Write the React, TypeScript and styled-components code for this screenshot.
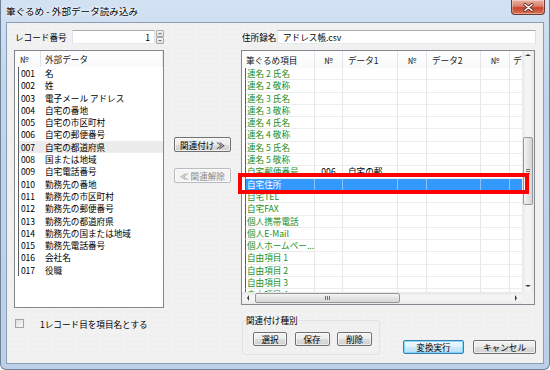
import React from 'react';
import styled, { createGlobalStyle } from 'styled-components';

const FONT = `"Noto Sans CJK JP", "Noto Sans", sans-serif`;

const Global = createGlobalStyle`
  html, body { margin: 0; padding: 0; background: #ffffff; }
  body { font-family: ${FONT}; }
  * { box-sizing: border-box; }
`;

const Window = styled.div`
  width: 550px;
  height: 370px;
  display: flex;
  flex-direction: column;
  border: 1px solid #6f8399;
  border-top: none;
  border-radius: 0 0 6px 6px;
  background: linear-gradient(180deg, #d3e2f3 0%, #c2d5ec 25%, #bcd0e8 100%);
  overflow: hidden;
`;

const TitleBar = styled.div`
  height: 22px;
  flex: none;
  display: flex;
  align-items: flex-start;
  padding: 0 4px 0 5px;
`;

const TitleText = styled.span`
  flex: 1;
  font-size: 9.6px;
  line-height: 22px;
  color: #000;
  white-space: nowrap;
  text-shadow: 0 0 4px #ffffff, 0 0 2px #ffffff;
`;

const CloseBtn = styled.div`
  width: 34px;
  height: 15px;
  border: 1px solid #6d3a35;
  border-top: none;
  border-radius: 0 0 4px 4px;
  background: linear-gradient(180deg, #eab1a4 0%, #d87f6c 45%, #c7452f 55%, #d77250 100%);
  box-shadow: inset 0 0 0 1px rgba(255, 255, 255, 0.35);
  display: flex;
  align-items: center;
  justify-content: center;
`;

const Client = styled.div`
  flex: 1;
  margin: 0 5px 5px 5px;
  background-color: #f0f0f0;
  background-image: radial-gradient(circle, rgba(255, 255, 255, 0.7) 0.6px, transparent 0.8px);
  background-size: 6px 6px;
  border: 1px solid #8a9fb7;
  display: grid;
  grid-template-columns: 150px 57px 295px;
  column-gap: 10px;
  align-items: start;
  padding: 7px 0 0 7px;
  font-family: ${FONT};
  font-size: 8.6px;
  color: #000;
`;

const Column = styled.div`
  display: flex;
  flex-direction: column;
`;

const MidColumn = styled.div`
  display: flex;
  flex-direction: column;
  gap: 16px;
  padding-top: 107px;
`;

const FieldRow = styled.div`
  display: flex;
  align-items: center;
  height: 14px;
  margin-bottom: 6px;
`;

const FieldLabel = styled.span<{ $w: number }>`
  width: ${(p) => p.$w}px;
  flex: none;
  padding-left: 1px;
  white-space: nowrap;
  line-height: 14px;
`;

const TextBox = styled.div<{ $right?: boolean; $pad?: number }>`
  flex: 1;
  height: 14px;
  background: #ffffff;
  border: 1px solid;
  border-color: #abadb3 #dbdfe6 #e3e9ef #e2e3ea;
  display: flex;
  align-items: center;
  justify-content: ${(p) => (p.$right ? 'flex-end' : 'flex-start')};
  padding: 0 ${(p) => (p.$right ? p.$pad ?? 4 : 0)}px 0 ${(p) => (p.$right ? 0 : p.$pad ?? 5)}px;
  line-height: 12px;
  white-space: nowrap;
`;

const SpinBox = styled.div`
  width: 8px;
  height: 14px;
  flex: none;
  margin-left: 1px;
  display: flex;
  flex-direction: column;
`;

const SpinBtn = styled.div`
  flex: 1;
  border: 1px solid #a9a9a9;
  border-radius: 1px;
  background: linear-gradient(180deg, #f6f6f6, #dcdcdc);
  display: flex;
  align-items: center;
  justify-content: center;
`;

type Dir = 'up' | 'down' | 'left' | 'right';

const Tri = styled.span<{ $dir: Dir; $s?: number; $c?: string }>`
  width: 0;
  height: 0;
  flex: none;
  ${({ $dir, $s = 3, $c = '#3a3a3a' }) => {
    const t = 'transparent';
    if ($dir === 'up')
      return `border-left:${$s}px solid ${t};border-right:${$s}px solid ${t};border-bottom:${$s - 0.5}px solid ${$c};`;
    if ($dir === 'down')
      return `border-left:${$s}px solid ${t};border-right:${$s}px solid ${t};border-top:${$s - 0.5}px solid ${$c};`;
    if ($dir === 'left')
      return `border-top:${$s}px solid ${t};border-bottom:${$s}px solid ${t};border-right:${$s - 0.5}px solid ${$c};`;
    return `border-top:${$s}px solid ${t};border-bottom:${$s}px solid ${t};border-left:${$s - 0.5}px solid ${$c};`;
  }}
`;

/* left list */
const ListBox = styled.div`
  height: 258px;
  border: 1px solid #828790;
  background: #ffffff;
  overflow: hidden;
  display: flex;
  flex-direction: column;
`;

const ListHead = styled.div`
  display: flex;
  height: 16px;
  flex: none;
  background: linear-gradient(180deg, #ffffff, #f8f9fa);
`;

const HeadCell = styled.div<{ $w?: number; $pl?: number; $center?: boolean }>`
  ${(p) => (p.$w ? `width:${p.$w}px; flex:none;` : 'flex:1;')}
  border-right: 1px solid #e3e5e8;
  padding-left: ${(p) => p.$pl ?? 0}px;
  display: flex;
  align-items: center;
  justify-content: ${(p) => (p.$center ? 'center' : 'flex-start')};
  white-space: nowrap;
  overflow: hidden;
  color: #1a1a1a;
`;

const ListRow = styled.div<{ $hover?: boolean }>`
  display: flex;
  flex: none;
  height: 12.3px;
  line-height: 12.3px;
  margin-left: 3px;
  border-left: 1px solid #5c5c5c;
  background: ${(p) => (p.$hover ? '#ececec' : 'transparent')};
  white-space: nowrap;
`;

const NumCell = styled.span`
  width: 22px;
  flex: none;
  padding-left: 2px;
  letter-spacing: -0.2px;
`;

const NameCell = styled.span`
  padding-left: 4px;
`;

const CheckRow = styled.div`
  display: flex;
  align-items: center;
  margin-top: 11px;
  height: 9px;
`;

const CheckBox = styled.span`
  width: 9px;
  height: 9px;
  margin-left: 1px;
  flex: none;
  border: 1px solid #a3a3a3;
  background: linear-gradient(135deg, #dcdcdc, #fbfbfb);
`;

const CheckLabel = styled.span`
  margin-left: 16px;
  white-space: nowrap;
  line-height: 10px;
`;

/* buttons */
const Button = styled.div<{ $w: number; $h?: number; $disabled?: boolean; $default?: boolean }>`
  width: ${(p) => p.$w}px;
  height: ${(p) => p.$h ?? 14}px;
  flex: none;
  border: 1px solid ${(p) => (p.$disabled ? '#b8bcbf' : p.$default ? '#3c7fb1' : '#707070')};
  border-radius: 2px;
  background: ${(p) =>
    p.$disabled
      ? '#f4f4f4'
      : p.$default
      ? 'linear-gradient(180deg, #eef7fd 0%, #e0f1fc 50%, #cde9fa 51%, #b9dff6 100%)'
      : 'linear-gradient(180deg, #f3f3f3 0%, #ebebeb 50%, #dddddd 51%, #d0d0d0 100%)'};
  box-shadow: inset 0 0 0 1px ${(p) => (p.$default ? 'rgba(110, 210, 250, 0.8)' : 'rgba(255, 255, 255, 0.6)')};
  color: ${(p) => (p.$disabled ? '#8a8a8a' : '#000')};
  display: flex;
  align-items: center;
  justify-content: center;
  white-space: nowrap;
  line-height: 12px;
`;

/* right grid */
const GridBox = styled.div`
  position: relative;
  width: 294px;
  height: 255px;
  border: 1px solid #828790;
  background: #ffffff;
  display: grid;
  grid-template-columns: 280px 12px;
  grid-template-rows: 241px 12px;
`;

const GridView = styled.div`
  overflow: hidden;
  display: flex;
  flex-direction: column;
`;

const GridHead = styled.div`
  display: flex;
  height: 17px;
  flex: none;
  background: linear-gradient(180deg, #ffffff, #f8f9fa);
`;

const GridRow = styled.div`
  display: flex;
  flex: none;
  height: 12.3px;
`;

const GCell = styled.div<{ $w: number; $first?: boolean; $sel?: boolean; $green?: boolean; $center?: boolean; $pl?: number }>`
  width: ${(p) => (p.$first ? p.$w - 3 : p.$w)}px;
  flex: none;
  margin-left: ${(p) => (p.$first ? 3 : 0)}px;
  ${(p) => (p.$first ? 'border-left: 1px solid #5c5c5c;' : '')}
  border-right: 1px solid ${(p) => (p.$sel ? '#8cc3fb' : '#e6e6e6')};
  border-bottom: 1px solid ${(p) => (p.$sel ? '#3399ff' : '#ececec')};
  background: ${(p) => (p.$sel ? '#3399ff' : 'transparent')};
  color: ${(p) => (p.$sel ? '#ffffff' : p.$green ? '#1c8f1c' : '#000')};
  padding-left: ${(p) => p.$pl ?? 0}px;
  text-align: ${(p) => (p.$center ? 'center' : 'left')};
  line-height: 11.3px;
  white-space: nowrap;
  overflow: hidden;
`;

const Highlight = styled.div`
  position: absolute;
  left: -4px;
  top: 122px;
  width: 291px;
  height: 21px;
  border: 4px solid #ff0000;
  pointer-events: none;
`;

const VScroll = styled.div`
  background: linear-gradient(90deg, #e6e6e6, #f4f4f4 30%, #f4f4f4 70%, #e8e8e8);
  display: flex;
  flex-direction: column;
  align-items: center;
`;

const HScroll = styled.div`
  background: linear-gradient(180deg, #e6e6e6, #f4f4f4 30%, #f4f4f4 70%, #e8e8e8);
  display: flex;
  align-items: center;
`;

const ArrowCell = styled.div<{ $pt?: number; $w?: number; $h?: number }>`
  width: ${(p) => p.$w ?? 12}px;
  height: ${(p) => p.$h ?? 12}px;
  flex: none;
  display: flex;
  align-items: ${(p) => (p.$pt !== undefined ? 'flex-start' : 'center')};
  padding-top: ${(p) => p.$pt ?? 0}px;
  justify-content: center;
`;

const VThumb = styled.div<{ $top: number; $h: number }>`
  width: 10px;
  height: ${(p) => p.$h}px;
  margin-top: ${(p) => p.$top}px;
  border: 1px solid #979797;
  border-radius: 2px;
  background: linear-gradient(90deg, #f4f4f4, #e4e4e4 50%, #d6d6d6);
  display: flex;
  flex-direction: column;
  align-items: center;
  justify-content: center;
  gap: 1px;
`;

const HThumb = styled.div<{ $left: number; $w: number }>`
  height: 10px;
  width: ${(p) => p.$w}px;
  margin-left: ${(p) => p.$left}px;
  border: 1px solid #979797;
  border-radius: 2px;
  background: linear-gradient(180deg, #f4f4f4, #e4e4e4 50%, #d6d6d6);
  display: flex;
  align-items: center;
  justify-content: center;
  gap: 1px;
`;

const Grip = styled.span<{ $vertical?: boolean }>`
  background: #6f6f6f;
  ${(p) => (p.$vertical ? 'width: 1px; height: 4px;' : 'width: 4px; height: 1px;')}
`;

const Spacer = styled.div`
  flex: 1;
`;

const Corner = styled.div`
  background: #f0f0f0;
`;

const BottomBar = styled.div`
  display: flex;
  align-items: flex-end;
  margin-top: 10px;
`;

const Group = styled.fieldset`
  margin: 0 0 0 1px;
  padding: 0;
  width: 138px;
  border: 1px solid #e2e2e2;
  border-radius: 3px;
  min-inline-size: auto;
`;

const GroupLegend = styled.legend`
  margin-left: 3px;
  padding: 0;
  line-height: 10px;
  font-size: 8.6px;
`;

const GroupButtons = styled.div`
  display: flex;
  gap: 7.5px;
  padding: 7px 0 8px 10px;
`;

const ActionButtons = styled.div`
  display: flex;
  gap: 9px;
  margin-left: 23px;
  margin-bottom: 1px;
`;

const leftItems = [
  '名',
  '姓',
  '電子メール アドレス',
  '自宅の番地',
  '自宅の市区町村',
  '自宅の郵便番号',
  '自宅の都道府県',
  '国または地域',
  '自宅電話番号',
  '勤務先の番地',
  '勤務先の市区町村',
  '勤務先の郵便番号',
  '勤務先の都道府県',
  '勤務先の国または地域',
  '勤務先電話番号',
  '会社名',
  '役職',
];

const cols = [73, 28, 55, 29, 54, 29, 40];

type GRowData = { name: string; no?: string; data?: string; sel?: boolean };

const gridRows: GRowData[] = [
  { name: '連名 2 氏名' },
  { name: '連名 2 敬称' },
  { name: '連名 3 氏名' },
  { name: '連名 3 敬称' },
  { name: '連名 4 氏名' },
  { name: '連名 4 敬称' },
  { name: '連名 5 氏名' },
  { name: '連名 5 敬称' },
  { name: '自宅郵便番号', no: '006', data: '自宅の郵' },
  { name: '自宅住所', sel: true },
  { name: '自宅TEL' },
  { name: '自宅FAX' },
  { name: '個人携帯電話' },
  { name: '個人E-Mail' },
  { name: '個人ホームペー...' },
  { name: '自由項目 1' },
  { name: '自由項目 2' },
  { name: '自由項目 3' },
  { name: '自由項目 4' },
];

const CloseGlyph = () => (
  <svg width="11" height="9" viewBox="0 0 11 9">
    <path d="M2 1.5 L9 7.5 M9 1.5 L2 7.5" stroke="#5a2a22" strokeWidth="3" strokeLinecap="round" />
    <path d="M2 1.5 L9 7.5 M9 1.5 L2 7.5" stroke="#ffffff" strokeWidth="1.6" strokeLinecap="round" />
  </svg>
);

export default function App() {
  return (
    <>
      <Global />
      <Window>
        <TitleBar>
          <TitleText>筆ぐるめ - 外部データ読み込み</TitleText>
          <CloseBtn>
            <CloseGlyph />
          </CloseBtn>
        </TitleBar>
        <Client>
          <Column>
            <FieldRow>
              <FieldLabel $w={58}>レコード番号</FieldLabel>
              <TextBox $right $pad={4}>1</TextBox>
              <SpinBox>
                <SpinBtn>
                  <Tri $dir="up" $s={2} />
                </SpinBtn>
                <SpinBtn>
                  <Tri $dir="down" $s={2} />
                </SpinBtn>
              </SpinBox>
            </FieldRow>
            <ListBox>
              <ListHead>
                <HeadCell $w={26} $pl={5}>№</HeadCell>
                <HeadCell $pl={4}>外部データ</HeadCell>
              </ListHead>
              {leftItems.map((name, i) => (
                <ListRow key={i} $hover={i === 6}>
                  <NumCell>{String(i + 1).padStart(3, '0')}</NumCell>
                  <NameCell>{name}</NameCell>
                </ListRow>
              ))}
            </ListBox>
            <CheckRow>
              <CheckBox />
              <CheckLabel>1レコード目を項目名とする</CheckLabel>
            </CheckRow>
          </Column>

          <MidColumn>
            <Button $w={57} $h={15}>関連付け ≫</Button>
            <Button $w={57} $h={15} $disabled>≪ 関連解除</Button>
          </MidColumn>

          <Column>
            <FieldRow>
              <FieldLabel $w={36}>住所録名</FieldLabel>
              <TextBox $pad={5}>アドレス帳.csv</TextBox>
            </FieldRow>
            <GridBox>
              <GridView>
                <GridHead>
                  <HeadCell $w={cols[0]} $pl={4}>筆ぐるめ項目</HeadCell>
                  <HeadCell $w={cols[1]} $center>№</HeadCell>
                  <HeadCell $w={cols[2]} $pl={5}>データ1</HeadCell>
                  <HeadCell $w={cols[3]} $center>№</HeadCell>
                  <HeadCell $w={cols[4]} $pl={5}>データ2</HeadCell>
                  <HeadCell $w={cols[5]} $center>№</HeadCell>
                  <HeadCell $w={cols[6]} $pl={3}>デ</HeadCell>
                </GridHead>
                {gridRows.map((r, i) => (
                  <GridRow key={i}>
                    <GCell $w={cols[0]} $first $green $sel={r.sel} $pl={1}>
                      {r.name}
                    </GCell>
                    <GCell $w={cols[1]} $center $sel={r.sel}>
                      {r.no ?? ''}
                    </GCell>
                    <GCell $w={cols[2]} $pl={5} $sel={r.sel}>
                      {r.data ?? ''}
                    </GCell>
                    <GCell $w={cols[3]} $sel={r.sel} />
                    <GCell $w={cols[4]} $sel={r.sel} />
                    <GCell $w={cols[5]} $sel={r.sel} />
                    <GCell $w={cols[6]} $sel={r.sel} />
                  </GridRow>
                ))}
              </GridView>
              <VScroll>
                <ArrowCell $pt={3}>
                  <Tri $dir="up" $s={3} />
                </ArrowCell>
                <VThumb $top={74} $h={68}>
                  <Grip />
                  <Grip />
                  <Grip />
                </VThumb>
                <Spacer />
                <ArrowCell>
                  <Tri $dir="down" $s={3} />
                </ArrowCell>
              </VScroll>
              <HScroll>
                <ArrowCell>
                  <Tri $dir="left" $s={3} />
                </ArrowCell>
                <HThumb $left={1} $w={145}>
                  <Grip $vertical />
                  <Grip $vertical />
                  <Grip $vertical />
                </HThumb>
                <Spacer />
                <ArrowCell>
                  <Tri $dir="right" $s={3} />
                </ArrowCell>
              </HScroll>
              <Corner />
              <Highlight />
            </GridBox>
            <BottomBar>
              <Group>
                <GroupLegend>関連付け種別</GroupLegend>
                <GroupButtons>
                  <Button $w={34}>選択</Button>
                  <Button $w={35}>保存</Button>
                  <Button $w={35}>削除</Button>
                </GroupButtons>
              </Group>
              <ActionButtons>
                <Button $w={61} $default>変換実行</Button>
                <Button $w={63}>キャンセル</Button>
              </ActionButtons>
            </BottomBar>
          </Column>
        </Client>
      </Window>
    </>
  );
}
